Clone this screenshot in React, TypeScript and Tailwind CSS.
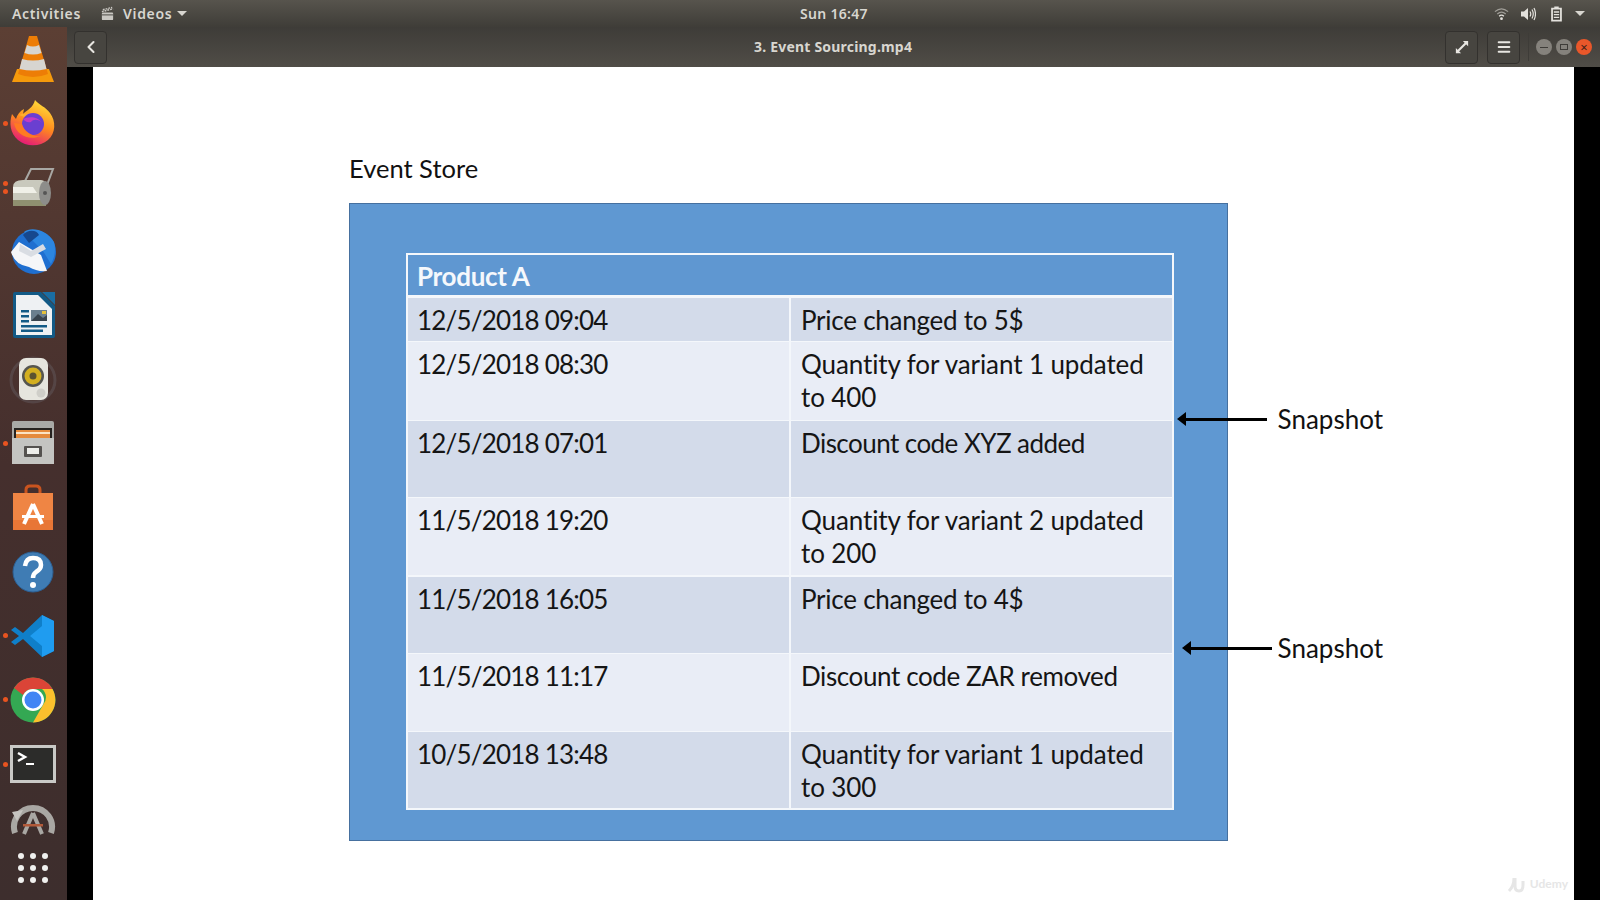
import { ChevronLeft, Menu } from "lucide-react";

const events = [
  { date: "12/5/2018 09:04", text: "Price changed to 5$", h: "h-[43px]", track: "tracking-[-0.25px]" },
  { date: "12/5/2018 08:30", text: "Quantity for variant 1 updated to 400", h: "h-[77.5px]", track: "tracking-[-0.1px]" },
  { date: "12/5/2018 07:01", text: "Discount code XYZ added", h: "h-[75.5px]", track: "tracking-[-0.55px]" },
  { date: "11/5/2018 19:20", text: "Quantity for variant 2 updated to 200", h: "h-[77px]", track: "tracking-[-0.1px]" },
  { date: "11/5/2018 16:05", text: "Price changed to 4$", h: "h-[76px]", track: "tracking-[-0.25px]" },
  { date: "11/5/2018 11:17", text: "Discount code ZAR removed", h: "h-[76.5px]", track: "tracking-[-0.4px]" },
  { date: "10/5/2018 13:48", text: "Quantity for variant 1 updated to 300", h: "h-[76px]", track: "tracking-[-0.1px]" },
];

const VlcIcon = () => (
  <svg viewBox="0 0 48 48" className="w-12 h-12">
    <path d="M3 47 L8 34 H40 L45 47 Z" fill="#f59a0c" />
    <path d="M20 1 H28 L39 39 Q24 45 9 39 Z" fill="#ed7d06" />
    <path d="M18 10 Q24 13 30 10 L32.500 18 Q24 21 15.500 18 Z" fill="#d7d5d0" />
    <path d="M13 24 Q24 27 35 24 L37.500 34 Q24 37 10.500 34 Z" fill="#d7d5d0" />
  </svg>
);

const FirefoxIcon = () => (
  <svg viewBox="0 0 48 48" className="w-12 h-12">
    <defs>
      <linearGradient id="ffOuter" x1="0.7" y1="0" x2="0.3" y2="1">
        <stop offset="0" stopColor="#ffe03a" />
        <stop offset="0.5" stopColor="#ff8a1e" />
        <stop offset="1" stopColor="#e3147c" />
      </linearGradient>
    </defs>
    <path d="M26 1 C30 6 37 8 41 14 C47 22 47 34 39 41 C31 48 17 48 9 41 C1 34 0 24 3 15 L7 20 C8 16 11 12 15 10 L14 15 C18 11 24 9 26 1 Z" fill="url(#ffOuter)" />
    <path d="M10 16 C15 14 22 13 26 17 L21 20 Z" fill="#ffb02e" />
    <circle cx="24" cy="25" r="11" fill="#6a3fd0" />
    <path d="M14 20 C18 18 28 16 33 24 C30 20 24 20 22 23 C18 24 16 22 14 20 Z" fill="#c13bc4" />
    <path d="M5 24 C7 36 20 42 32 37 C24 38 15 33 13 25 Z" fill="#ff7a22" />
  </svg>
);

const DriveIcon = () => (
  <svg viewBox="0 0 48 48" className="w-12 h-12">
    <path d="M16 18 L22 6 H44 L38 22" fill="none" stroke="#a8a8a4" strokeWidth="2" />
    <path d="M4 24 Q4 17 14 17 H32 Q37 17 37 24 V37 Q37 43 30 43 H12 Q4 43 4 37 Z" fill="#c9c9bd" />
    <path d="M4 24 H24 L28 30 H4 Z" fill="#f0f0e8" />
    <rect x="4" y="37" width="33" height="6" fill="#8f9070" />
    <ellipse cx="36" cy="30" rx="6" ry="12" fill="#8d8d8a" />
    <circle cx="36" cy="30" r="2" fill="#555" />
  </svg>
);

const ThunderbirdIcon = () => (
  <svg viewBox="0 0 48 48" className="w-12 h-12">
    <circle cx="25" cy="25" r="22" fill="#1f6fd0" />
    <path d="M15 5 C22 -1 38 3 45 15 C47 22 46 30 42 37 L34 24 Z" fill="#2c86e0" />
    <path d="M14 8 C19 2 28 3 30 8 L20 16 Z" fill="#16488e" />
    <path d="M2 25 L10 15 L32 28 L38 44 Q28 45 20 40 Q6 38 2 25 Z" fill="#f5f6f8" />
    <path d="M11 17 L22 24 L34 17 L37 22 L22 30 L10 24 Z" fill="#d9dde3" />
  </svg>
);

const WriterIcon = () => (
  <svg viewBox="0 0 48 48" className="w-12 h-12">
    <path d="M6 1 H32 L46 15 V45 Q46 47 44 47 H6 Q4 47 4 45 V3 Q4 1 6 1 Z" fill="#125a86" />
    <path d="M7 4 H29 L43 18 V44 H7 Z" fill="#eef1f3" />
    <path d="M33 1 H46 V14 Z" fill="#1a6ea3" />
    <rect x="12" y="19" width="8" height="2.500" fill="#125a86" />
    <rect x="12" y="24" width="8" height="2.500" fill="#125a86" />
    <rect x="12" y="29" width="8" height="2.500" fill="#125a86" />
    <rect x="12" y="34" width="26" height="2.500" fill="#125a86" />
    <rect x="12" y="38.500" width="22" height="2.500" fill="#125a86" />
    <rect x="22" y="19" width="16" height="11" fill="#6b7f8e" />
    <path d="M22 30 L29 23 L34 27 L38 24 V30 Z" fill="#38434d" />
    <rect x="33" y="20" width="4" height="3" fill="#e5c23b" />
  </svg>
);

const SpeakerIcon = () => (
  <svg viewBox="0 0 48 48" className="w-12 h-12">
    <circle cx="24" cy="24" r="22" fill="none" stroke="#6c6a70" strokeOpacity="0.35" strokeWidth="3" />
    <rect x="10" y="2" width="29" height="42" rx="7" fill="#e6e5de" />
    <circle cx="24" cy="20" r="11" fill="#55554f" />
    <circle cx="24" cy="20" r="8.500" fill="#d3af20" />
    <circle cx="24" cy="20" r="3.500" fill="#5b5330" />
    <circle cx="32" cy="37" r="4.500" fill="#cfcec8" />
  </svg>
);

const FilesIcon = () => (
  <svg viewBox="0 0 48 48" className="w-12 h-12">
    <rect x="3" y="1" width="42" height="43" rx="2" fill="#a9a9a6" />
    <rect x="5" y="8" width="38" height="12" fill="#26221f" />
    <rect x="7" y="10" width="34" height="8" fill="#e58a3c" />
    <rect x="7" y="12" width="34" height="2" fill="#fbe3c4" />
    <rect x="3" y="18" width="42" height="26" fill="#c4c4c1" />
    <rect x="15" y="26" width="18" height="11" rx="1" fill="#55524f" />
    <rect x="18" y="28" width="12" height="6" fill="#eeeeea" />
  </svg>
);

const StoreIcon = () => (
  <svg viewBox="0 0 48 48" className="w-12 h-12">
    <path d="M17 12 V6 Q17 2 21 2 H27 Q31 2 31 6 V12" fill="none" stroke="#c9541f" strokeWidth="3" />
    <path d="M4 9 H44 V46 H4 Z" fill="#ef8544" />
    <path d="M4 36 H44 V46 H4 Z" fill="#e87636" />
    <path d="M24 20 L15 40 M24 20 L33 40" stroke="#ffffff" strokeWidth="4" />
    <rect x="13" y="31" width="22" height="3" fill="#ffffff" />
  </svg>
);

const HelpIcon = () => (
  <svg viewBox="0 0 48 48" className="w-12 h-12">
    <circle cx="24" cy="24" r="20" fill="#3f7cb4" stroke="#2c5f92" strokeWidth="1" />
    <path d="M16 18 Q17 10 24 10 Q32 10 32 17 Q32 21 27 24 Q24 26 24 30" fill="none" stroke="#ffffff" strokeWidth="4.500" />
    <circle cx="24" cy="37" r="3" fill="#ffffff" />
  </svg>
);

const VscodeIcon = () => (
  <svg viewBox="0 0 48 48" className="w-12 h-12">
    <path d="M33 3 L45 9 V39 L33 45 L14 27 L6 33 L2 30 L10 24 L2 18 L6 15 L14 21 Z" fill="#0f7fc9" />
    <path d="M33 3 L45 9 V39 L33 45 Z M33 14 L21 24 L33 34 Z" fill="#1f9cf0" fillRule="evenodd" />
  </svg>
);

const ChromeIcon = () => (
  <svg viewBox="0 0 48 48" className="w-12 h-12">
    <circle cx="24" cy="24" r="22.500" fill="#34a853" />
    <path d="M24 1.500 A22.500 22.500 0 0 1 43.500 13 H24 A11 11 0 0 0 14 19 L5 12 A22.500 22.500 0 0 1 24 1.500 Z" fill="#db4437" />
    <path d="M43.500 13 A22.500 22.500 0 0 1 24 46.500 L34 29 A11 11 0 0 0 33 13 Z" fill="#fbc02d" />
    <circle cx="24" cy="24" r="11" fill="#ffffff" />
    <circle cx="24" cy="24" r="8.500" fill="#4285f4" />
  </svg>
);

const TerminalIcon = () => (
  <svg viewBox="0 0 48 48" className="w-12 h-12">
    <rect x="1" y="5" width="46" height="38" fill="#c9c9c6" />
    <rect x="4" y="8" width="40" height="32" fill="#2c2c2a" />
    <path d="M9 13 L16 17 L9 21" fill="none" stroke="#ffffff" strokeWidth="2.500" />
    <rect x="17" y="23" width="8" height="2" fill="#ffffff" />
  </svg>
);

const UpdaterIcon = () => (
  <svg viewBox="0 0 48 48" className="w-12 h-12">
    <path d="M6 36 A19 19 0 1 1 42 36" fill="none" stroke="#a9a7a3" strokeWidth="6" />
    <path d="M3 15 L14 13 L8 24 Z" fill="#c6c4c0" />
    <path d="M24 16 L15 37 M24 16 L33 37" stroke="#a9a7a3" strokeWidth="4" />
    <rect x="14" y="27" width="20" height="2.500" fill="#b25a3a" />
  </svg>
);

const dockItems = [
  { icon: <VlcIcon />, dots: 0 },
  { icon: <FirefoxIcon />, dots: 1 },
  { icon: <DriveIcon />, dots: 2 },
  { icon: <ThunderbirdIcon />, dots: 0 },
  { icon: <WriterIcon />, dots: 0 },
  { icon: <SpeakerIcon />, dots: 0 },
  { icon: <FilesIcon />, dots: 1 },
  { icon: <StoreIcon />, dots: 0 },
  { icon: <HelpIcon />, dots: 0 },
  { icon: <VscodeIcon />, dots: 1 },
  { icon: <ChromeIcon />, dots: 1 },
  { icon: <TerminalIcon />, dots: 1 },
];

const TopBar = () => (
  <div className="relative h-[27px] flex items-center justify-between bg-gradient-to-b from-[#57544d] to-[#3f3d38] text-[#d8d6d0] text-[14px] font-semibold font-['Noto_Sans',sans-serif]">
    <div className="flex items-center">
      <span className="ml-3 tracking-[0.65px]">Activities</span>
      <svg viewBox="0 0 16 16" className="w-[15px] h-[15px] ml-[19px]">
        <path d="M2 6 L14 3 M3 4 L13 1.500" stroke="#c9c7c2" strokeWidth="1.500" strokeDasharray="2 1" />
        <rect x="2" y="7" width="12" height="8" rx="1" fill="#c9c7c2" />
        <rect x="2" y="9" width="12" height="1" fill="#45433e" />
      </svg>
      <span className="ml-[8px] tracking-[0.7px]">Videos</span>
      <span className="ml-[5px] w-0 h-0 border-x-[5px] border-x-transparent border-t-[5px] border-t-[#d8d6d0]" />
    </div>
    <span className="absolute left-[800px] w-[68px] text-center tracking-[0.3px]">Sun 16:47</span>
    <div className="flex items-center text-[#e4e2dd]">
      <svg viewBox="0 0 16 16" className="w-[15px] h-[15px]">
        <path d="M1 6 Q8 0 15 6 M3.500 8.500 Q8 4.500 12.500 8.500" fill="none" stroke="currentColor" strokeOpacity="0.55" strokeWidth="1.400" />
        <path d="M5.500 11 Q8 8.500 10.500 11" fill="none" stroke="currentColor" strokeWidth="1.400" />
        <circle cx="8" cy="13.500" r="1.500" fill="currentColor" />
      </svg>
      <svg viewBox="0 0 16 16" className="w-[16px] h-[16px] ml-[11px]">
        <path d="M1 5.500 H4 L8 2 V14 L4 10.500 H1 Z" fill="currentColor" />
        <path d="M10 5.500 Q11.500 8 10 10.500 M12 3.500 Q14.500 8 12 12.500 M14 2 Q17 8 14 14" fill="none" stroke="currentColor" strokeWidth="1.200" />
      </svg>
      <svg viewBox="0 0 14 18" className="w-[13px] h-[16px] ml-[14px]">
        <path d="M4.500 0.500 H9.500 V2 H13 V17.500 H1 V2 H4.500 Z M3 4 V15.500 H11 V4 Z" fill="currentColor" />
        <path d="M4 6 H10 V7.500 H4 Z M4 9 H10 V10.500 H4 Z M4 12 H10 V13.500 H4 Z" fill="currentColor" />
      </svg>
      <span className="ml-[12px] mr-[15px] w-0 h-0 border-x-[5px] border-x-transparent border-t-[5px] border-t-[#d8d6d0]" />
    </div>
  </div>
);

const Dock = () => (
  <div className="w-[67px] shrink-0 flex flex-col bg-gradient-to-b from-[#5c3f34] via-[#452f2d] to-[#3d2e2d] pt-0 pr-[1px]">
    {dockItems.map((item, i) => (
      <div key={i} className="relative h-[64.1px] flex items-center justify-center">
        {item.icon}
        {item.dots > 0 && (
          <div className="absolute left-[3px] top-0 bottom-0 flex flex-col justify-center gap-[3px]">
            {Array.from({ length: item.dots }).map((_, d) => (
              <span key={d} className="w-[5px] h-[5px] rounded-full bg-[#e95420]" />
            ))}
          </div>
        )}
      </div>
    ))}
    <div className="h-[50px] overflow-hidden flex items-center justify-center">
      <UpdaterIcon />
    </div>
    <div className="grid grid-cols-3 gap-[6px] w-[30px] self-center mt-[7px]">
      {Array.from({ length: 9 }).map((_, i) => (
        <span key={i} className="w-[6px] h-[6px] rounded-full bg-[#f0f0ee]" />
      ))}
    </div>
  </div>
);

const HeaderButton = ({ children }: { children: React.ReactNode }) => (
  <div className="w-[33px] h-[33px] rounded-[4px] border border-[#33312e] bg-[#474540] flex items-center justify-center text-[#e8e6e1]">
    {children}
  </div>
);

const WindowHeader = () => (
  <div className="h-[40px] relative flex items-center justify-between bg-gradient-to-b from-[#3e3c38] to-[#504d47] font-['Noto_Sans',sans-serif]">
    <div className="ml-[7px]">
      <HeaderButton>
        <ChevronLeft size={20} strokeWidth={2.5} />
      </HeaderButton>
    </div>
    <span className="absolute left-[687px] top-[11px] text-[14px] leading-[18px] font-bold tracking-[0.2px] text-[#d8d6d0]">
      3. Event Sourcing.mp4
    </span>
    <div className="flex items-center">
      <HeaderButton>
        <svg viewBox="0 0 16 16" className="w-[14px] h-[14px]">
          <path d="M2 14 L14 2" stroke="currentColor" strokeWidth="2.500" />
          <path d="M9 1 H15 V7 Z M1 9 V15 H7 Z" fill="currentColor" />
        </svg>
      </HeaderButton>
      <div className="ml-[9px]">
        <HeaderButton>
          <Menu size={16} strokeWidth={3} />
        </HeaderButton>
      </div>
      <div className="w-px h-[28px] bg-[#3e3c38] ml-[8px]" />
      <span className="ml-[7px] w-4 h-4 rounded-full bg-[#85827c] flex items-center justify-center">
        <span className="w-[8px] h-px bg-[#3e3c38]" />
      </span>
      <span className="ml-[4px] w-4 h-4 rounded-full bg-[#85827c] flex items-center justify-center">
        <span className="w-[8px] h-[6px] border border-[#3e3c38]" />
      </span>
      <span className="ml-[4px] mr-[8px] w-4 h-4 rounded-full bg-[#e9572a] flex items-center justify-center text-[#3e2218] text-[13px] leading-none">
        ×
      </span>
    </div>
  </div>
);

const SnapshotLabel = ({ top, arrowClass, gapClass }: { top: string; arrowClass: string; gapClass: string }) => (
  <div className={`absolute right-[191px] ${top} flex items-center ${gapClass}`}>
    <div className={`flex items-center ${arrowClass}`}>
      <span className="w-0 h-0 border-y-[7px] border-y-transparent border-r-[9px] border-r-black" />
      <span className="flex-1 h-[3px] bg-black" />
    </div>
    <span className="text-[26px] leading-[32px] text-[#111]">Snapshot</span>
  </div>
);

const EventTable = () => (
  <div className="border-2 border-[#f4f7fb] bg-[#f4f7fb] flex flex-col gap-[1.5px]">
    <div className="h-[41px] bg-[#5f97d1] border-b border-[#f4f7fb] pl-[9px] text-[26px] leading-[42px] font-bold tracking-[-0.3px] text-[#f5f8fc]">Product A</div>
    {events.map((ev, i) => (
      <div key={ev.date} className={`grid grid-cols-[381px_1fr] gap-[2px] ${ev.h}`}>
        <div className={`pl-[9px] pt-[6px] text-[26px] leading-[33px] tracking-[-0.8px] text-[#151515] ${i % 2 === 0 ? "bg-[#d3dbea]" : "bg-[#e9edf6]"}`}>
          {ev.date}
        </div>
        <div className={`pl-[10px] pr-[14px] pt-[6px] text-[26px] leading-[33px] ${ev.track} text-[#151515] ${i % 2 === 0 ? "bg-[#d3dbea]" : "bg-[#e9edf6]"}`}>
          {ev.text}
        </div>
      </div>
    ))}
  </div>
);

export default function App() {
  return (
    <div className="w-[1600px] h-[900px] overflow-hidden flex flex-col bg-black">
      <TopBar />
      <div className="flex-1 flex min-h-0">
        <Dock />
        <div className="flex-1 flex flex-col min-w-0">
          <WindowHeader />
          <div className="flex-1 px-[26px] bg-black">
            <div className="relative h-full bg-white pl-[256px] pt-[85px] font-['Lato',sans-serif] text-[#111]">
              <h1 className="text-[25.500px] leading-[32px] font-normal">Event Store</h1>
              <div className="mt-[19px] w-[879px] h-[638px] bg-[#5f98d2] border border-[#46709f] pt-[49px] pl-[56px] pr-[53px]">
                <EventTable />
              </div>
              <SnapshotLabel top="top-[336px]" arrowClass="w-[90px]" gapClass="gap-[11px]" />
              <SnapshotLabel top="top-[565px]" arrowClass="w-[90px]" gapClass="gap-[6px]" />
              <div className="absolute right-[6px] bottom-[6px] flex items-center gap-[3px] text-[#e6e6e6]">
                <svg viewBox="0 0 20 20" className="w-[20px] h-[20px]">
                  <path d="M2 17 Q7 12 7 4 M8 4 V12 Q8 17 12 17 Q16 17 16 11 V7" fill="none" stroke="currentColor" strokeWidth="3" />
                </svg>
                <span className="text-[12px] font-bold">Udemy</span>
              </div>
            </div>
          </div>
        </div>
      </div>
    </div>
  );
}
